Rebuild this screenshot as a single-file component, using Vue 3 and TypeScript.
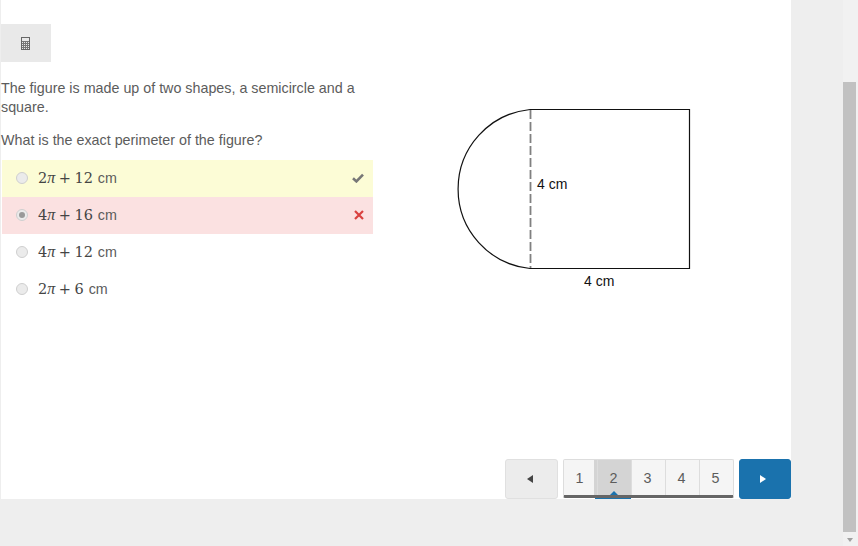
<script setup lang="ts">
interface Choice {
  num: string;
  state?: 'correct' | 'wrong';
  checked?: boolean;
}

const choices: Choice[] = [
  { num: '2', state: 'correct' },
  { num: '4', state: 'wrong', checked: true },
  { num: '4' },
  { num: '2' },
];
const tails = ['12', '16', '12', '6'];
const pages = [1, 2, 3, 4, 5];
</script>

<template>
  <div class="page">
    <div class="panel">
      <div class="toolbar">
        <button class="calc" type="button" aria-label="Calculator">
          <svg width="9" height="13" viewBox="0 0 9 13">
            <rect x="0.5" y="0.5" width="8" height="12" fill="none" stroke="#666" />
            <path d="M1 4.500h7M1 6.500h7M1 8.500h7M1 10.500h7M2.500 5v7M4.500 5v7M6.500 5v7" stroke="#777" stroke-width="1" fill="none" />
          </svg>
        </button>
      </div>

      <div class="body">
        <div class="question">
          <p class="intro">The figure is made up of two shapes, a semicircle and a square.</p>
          <p class="ask">What is the exact perimeter of the figure?</p>
          <ul class="choices">
            <li v-for="(c, i) in choices" :key="i" class="choice" :class="c.state">
              <span class="radio" :class="{ checked: c.checked }"></span>
              <span class="math">{{ c.num }}<i>π</i><span class="plus">+</span>{{ tails[i] }}</span>
              <span class="unit">cm</span>
              <svg v-if="c.state === 'correct'" class="mark" width="12" height="10" viewBox="0 0 12 10">
                <path d="M1 5.200l3.400 3.200L11 1.600" fill="none" stroke="#777" stroke-width="2.600" />
              </svg>
              <svg v-if="c.state === 'wrong'" class="mark" width="10" height="10" viewBox="0 0 10 10">
                <path d="M1 1l8 8M9 1l-8 8" fill="none" stroke="#d9413f" stroke-width="2.200" />
              </svg>
            </li>
          </ul>
        </div>

        <svg class="figure" width="240" height="190" viewBox="0 0 240 190">
          <path d="M74 5.500A79.900 79.900 0 0 0 74 164.500H233.500V5.500H74" fill="none" stroke="#111" stroke-width="1.200" />
          <path d="M74.500 6V164" fill="none" stroke="#808080" stroke-width="1.800" stroke-dasharray="9 3" />
          <text x="81" y="85">4 cm</text>
          <text x="128" y="182">4 cm</text>
        </svg>
      </div>

      <nav class="pager">
        <button class="arrow prev" type="button" aria-label="Previous"></button>
        <div class="numbers">
          <button v-for="p in pages" :key="p" class="num" :class="{ active: p === 2 }" type="button">{{ p }}</button>
        </div>
        <button class="arrow next" type="button" aria-label="Next"></button>
      </nav>
    </div>

    <div class="scrollbar">
      <div class="thumb"></div>
      <span class="down"></span>
    </div>
  </div>
</template>

<style>
html,
body {
  margin: 0;
  overflow: hidden;
}
</style>

<style scoped>
.page {
  width: 858px;
  height: 546px;
  display: flex;
  justify-content: space-between;
  align-items: flex-start;
  background: #eeeeee;
  font-family: "Liberation Sans", Arial, sans-serif;
  color: #5c5c5c;
}

.panel {
  width: 790px;
  height: 499px;
  border-left: 1px solid #eeeeee;
  background: #fff;
  display: flex;
  flex-direction: column;
}

.toolbar {
  padding-top: 24px;
  height: 38px;
}

.calc {
  display: flex;
  align-items: center;
  justify-content: center;
  width: 50px;
  height: 38px;
  padding: 0 2px 0 0;
  border: 0;
  background: #e9e9e9;
}

.body {
  flex: 1;
  display: flex;
  min-height: 0;
}

.question {
  width: 372px;
  padding-top: 17px;
}

.intro,
.ask {
  margin: 0;
  font-size: 14.300px;
  line-height: 19px;
}

.intro {
  margin-bottom: 14px;
}

.choices {
  list-style: none;
  margin: 10px 0 0;
  padding: 0;
}

.choice {
  box-sizing: border-box;
  height: 37px;
  margin-left: 1px;
  display: flex;
  align-items: center;
  padding: 0 9px 2px 14px;
}

.choice.correct {
  background: #fcfcd6;
}

.choice.wrong {
  background: #fbe1e1;
}

.radio {
  width: 10px;
  height: 10px;
  border: 1px solid #cfcfcf;
  border-radius: 50%;
  background: #ebebeb;
  margin-right: 10px;
  position: relative;
}

.radio.checked::after {
  content: "";
  position: absolute;
  inset: 2px;
  border-radius: 50%;
  background: #999;
}

.math {
  font-family: "DejaVu Serif", "Liberation Serif", serif;
  font-size: 14.500px;
  color: #444;
}

.math i {
  font-family: "Liberation Serif", serif;
  font-size: 16px;
}

.plus {
  margin: 0 3.500px;
}

.unit {
  font-size: 14.300px;
  margin-left: 5px;
}

.mark {
  margin-left: auto;
}

.figure {
  margin: 42px 0 0 83px;
  overflow: visible;
}

.figure text {
  font-family: "Liberation Sans", Arial, sans-serif;
  font-size: 14px;
  fill: #111;
}

.pager {
  display: flex;
  justify-content: flex-end;
  gap: 5px;
  height: 40px;
}

.arrow {
  position: relative;
  width: 53px;
  height: 40px;
  padding: 0;
  border-radius: 3px;
  border: 1px solid #e0e0e0;
  background: #ececec;
}

.arrow::after {
  content: "";
  position: absolute;
  top: 15px;
  border-style: solid;
  border-width: 4px 6px;
  border-color: transparent;
}

.prev::after {
  border-right-color: #444;
  left: 15px;
}

.next {
  width: 52px;
  border-color: #1a72ad;
  background: #1a72ad;
}

.next::after {
  border-left-color: #fff;
  left: 20px;
}

.numbers {
  position: relative;
  display: flex;
  width: 171px;
  height: 39px;
  box-sizing: border-box;
  border: 1px solid #dddddd;
  border-bottom: 3px solid #666;
  border-radius: 2px;
  background: #f5f5f5;
}

.num {
  flex: 1;
  padding: 0 2px 0 0;
  border: 0;
  border-left: 1px solid #dddddd;
  background: transparent;
  font-family: "Liberation Sans", Arial, sans-serif;
  font-size: 14.300px;
  color: #5c5c5c;
  position: relative;
}

.num:first-child {
  border-left: 0;
}

.num.active {
  background: #d4d4d4;
  box-shadow: -3px 0 0 #d4d4d4;
}

.num.active::after {
  content: "";
  position: absolute;
  left: -3px;
  right: 0;
  bottom: -4px;
  height: 1px;
  background: #1a72ad;
}

.num.active::before {
  content: "";
  position: absolute;
  left: 50%;
  bottom: 0;
  margin-left: -5px;
  border: 4px solid transparent;
  border-top: 0;
  border-bottom-color: #1a72ad;
}

.scrollbar {
  position: relative;
  width: 15px;
  height: 546px;
  background: #f1f1f1;
  flex: none;
}

.thumb {
  position: absolute;
  top: 82px;
  left: 0;
  right: 2px;
  height: 450px;
  background: #c1c1c1;
}

.down {
  position: absolute;
  left: 4px;
  top: 538px;
  border-style: solid;
  border-width: 4px 3px 0;
  border-color: #a0a0a0 transparent transparent;
}
</style>
